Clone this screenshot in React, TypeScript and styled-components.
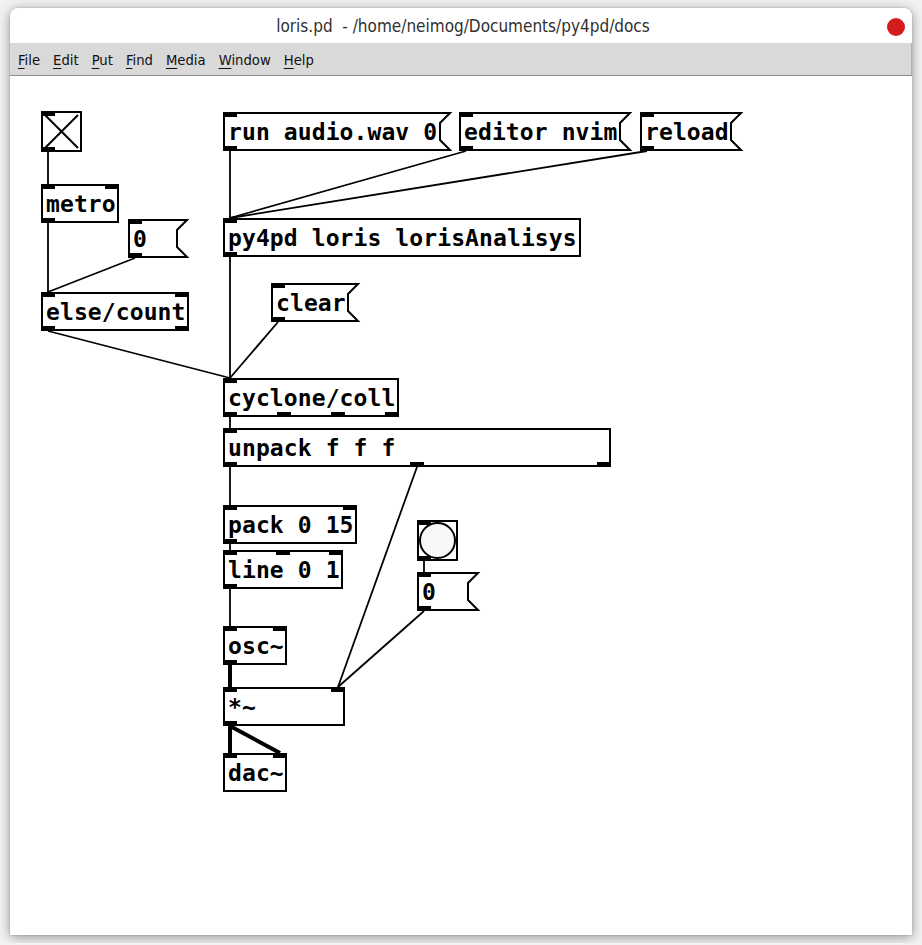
import React from "react";
import styled, { createGlobalStyle } from "styled-components";

const GlobalStyle = createGlobalStyle`
  html, body {
    margin: 0;
    padding: 0;
    background: #f2f2f2;
  }
  body {
    padding: 8px 10px;
    font-family: "DejaVu Sans", sans-serif;
  }
`;

// canvas origin in page coordinates (window left, below the menu bar)
const CX = 10;
const CY = 76;
const IOW = 14;
const IOH = 5;
const BOX_H = 39;
const FLAG = 10;

type Kind = "obj" | "msg" | "tgl" | "bng";

interface PdNode {
  id: string;
  kind: Kind;
  x: number;
  y: number;
  w: number;
  text?: string;
  ins: number;
  outs: number;
}

interface Cord {
  from: string;
  outlet: number;
  to: string;
  inlet: number;
  signal?: boolean;
}

const nodes: PdNode[] = [
  { id: "tgl", kind: "tgl", x: 41, y: 111, w: 41, ins: 1, outs: 1 },
  { id: "metro", kind: "obj", x: 41, y: 184, w: 78, text: "metro", ins: 2, outs: 1 },
  { id: "zero1", kind: "msg", x: 128, y: 219, w: 60, text: "0", ins: 1, outs: 1 },
  { id: "count", kind: "obj", x: 41, y: 292, w: 148, text: "else/count", ins: 2, outs: 2 },
  { id: "run", kind: "msg", x: 223, y: 112, w: 228, text: "run audio.wav 0", ins: 1, outs: 1 },
  { id: "editor", kind: "msg", x: 459, y: 112, w: 172, text: "editor nvim", ins: 1, outs: 1 },
  { id: "reload", kind: "msg", x: 640, y: 112, w: 102, text: "reload", ins: 1, outs: 1 },
  { id: "py4pd", kind: "obj", x: 223, y: 218, w: 358, text: "py4pd loris lorisAnalisys", ins: 1, outs: 1 },
  { id: "clear", kind: "msg", x: 271, y: 283, w: 88, text: "clear", ins: 1, outs: 1 },
  { id: "coll", kind: "obj", x: 223, y: 378, w: 176, text: "cyclone/coll", ins: 1, outs: 4 },
  { id: "unpack", kind: "obj", x: 223, y: 428, w: 388, text: "unpack f f f", ins: 1, outs: 3 },
  { id: "pack", kind: "obj", x: 223, y: 505, w: 134, text: "pack 0 15", ins: 2, outs: 1 },
  { id: "line", kind: "obj", x: 223, y: 550, w: 120, text: "line 0 1", ins: 3, outs: 1 },
  { id: "bng", kind: "bng", x: 417, y: 520, w: 41, ins: 1, outs: 1 },
  { id: "zero2", kind: "msg", x: 417, y: 572, w: 62, text: "0", ins: 1, outs: 1 },
  { id: "osc", kind: "obj", x: 223, y: 626, w: 64, text: "osc~", ins: 2, outs: 1 },
  { id: "mul", kind: "obj", x: 223, y: 687, w: 122, text: "*~", ins: 2, outs: 1 },
  { id: "dac", kind: "obj", x: 223, y: 753, w: 64, text: "dac~", ins: 2, outs: 0 },
];

const cords: Cord[] = [
  { from: "tgl", outlet: 0, to: "metro", inlet: 0 },
  { from: "metro", outlet: 0, to: "count", inlet: 0 },
  { from: "zero1", outlet: 0, to: "count", inlet: 0 },
  { from: "count", outlet: 0, to: "coll", inlet: 0 },
  { from: "run", outlet: 0, to: "py4pd", inlet: 0 },
  { from: "editor", outlet: 0, to: "py4pd", inlet: 0 },
  { from: "reload", outlet: 0, to: "py4pd", inlet: 0 },
  { from: "py4pd", outlet: 0, to: "coll", inlet: 0 },
  { from: "clear", outlet: 0, to: "coll", inlet: 0 },
  { from: "coll", outlet: 0, to: "unpack", inlet: 0 },
  { from: "unpack", outlet: 0, to: "pack", inlet: 0 },
  { from: "unpack", outlet: 1, to: "mul", inlet: 1 },
  { from: "pack", outlet: 0, to: "line", inlet: 0 },
  { from: "line", outlet: 0, to: "osc", inlet: 0 },
  { from: "bng", outlet: 0, to: "zero2", inlet: 0 },
  { from: "zero2", outlet: 0, to: "mul", inlet: 1 },
  { from: "osc", outlet: 0, to: "mul", inlet: 0, signal: true },
  { from: "mul", outlet: 0, to: "dac", inlet: 0, signal: true },
  { from: "mul", outlet: 0, to: "dac", inlet: 1, signal: true },
];

const heightOf = (n: PdNode) => (n.kind === "tgl" || n.kind === "bng" ? n.w : BOX_H);
const bodyWidth = (n: PdNode) => (n.kind === "msg" ? n.w - FLAG : n.w);

const portLeft = (n: PdNode, i: number, count: number) =>
  count > 1 ? Math.round((i * (bodyWidth(n) - IOW)) / (count - 1)) : 0;

const byId = (id: string) => nodes.find((n) => n.id === id)!;

const Window = styled.div`
  width: 902px;
  height: 927px;
  background: #fff;
  border-radius: 8px 8px 0 0;
  box-shadow: 0 2px 12px rgba(0, 0, 0, 0.4), 0 0 1px rgba(0, 0, 0, 0.5);
  display: flex;
  flex-direction: column;
  overflow: hidden;
`;

const TitleBar = styled.div`
  height: 35px;
  display: grid;
  grid-template-columns: 1fr auto 1fr;
  align-items: center;
  background: #fff;
`;

const Title = styled.div`
  grid-column: 2;
  font-family: "DejaVu Sans Condensed", "Liberation Sans Narrow", "DejaVu Sans", sans-serif;
  font-stretch: condensed;
  font-size: 17px;
  color: #303030;
  white-space: pre;
  padding: 1px 0 0 4px;
`;

const CloseButton = styled.span`
  grid-column: 3;
  justify-self: end;
  width: 18px;
  height: 18px;
  margin: 2px 7px 0 0;
  border-radius: 50%;
  background: #d51c1c;
`;

const MenuBar = styled.div`
  height: 32px;
  display: flex;
  align-items: center;
  gap: 13px;
  padding: 0 0 0 8px;
  background: #d9d9d9;
  border-bottom: 1px solid #8c8c8c;
  border-right: 1px solid #b0b0b0;
`;

const MenuItem = styled.span`
  font-family: "DejaVu Sans Condensed", "Liberation Sans Narrow", "DejaVu Sans", sans-serif;
  font-stretch: condensed;
  font-size: 14.7px;
  color: #111;
  padding-top: 1px;

  u {
    text-decoration-thickness: 1px;
    text-underline-offset: 3px;
  }
`;

const Canvas = styled.div`
  position: relative;
  flex: 1;
  background: #fff;
`;

const CordLayer = styled.svg`
  position: absolute;
  inset: 0;
  width: 100%;
  height: 100%;
`;

const NodeFrame = styled.div.attrs<{ $x: number; $y: number; $w: number; $h: number }>((p) => ({
  style: { left: p.$x, top: p.$y, width: p.$w, height: p.$h },
}))<{ $x: number; $y: number; $w: number; $h: number }>`
  position: absolute;
  box-sizing: border-box;
`;

const ObjBox = styled(NodeFrame)`
  border: 2px solid #000;
  background: #fff;
`;

const MsgBox = styled(NodeFrame)`
  background: transparent;
`;

const BoxText = styled.div<{ $inset: number }>`
  position: relative;
  padding: ${(p) => p.$inset + 5}px 0 0 ${(p) => p.$inset + 3}px;
  font-family: "DejaVu Sans Mono", monospace;
  font-weight: bold;
  font-size: 23px;
  letter-spacing: 0.1px;
  line-height: 27px;
  color: #000;
  white-space: pre;
`;

const Outline = styled.svg`
  position: absolute;
  inset: 0;
  overflow: visible;
`;

const Port = styled.span<{ $left: number; $bottom?: boolean; $inset: number }>`
  position: absolute;
  left: ${(p) => p.$left - p.$inset}px;
  ${(p) => (p.$bottom ? `bottom: ${-p.$inset}px;` : `top: ${-p.$inset}px;`)}
  width: ${IOW}px;
  height: ${IOH}px;
  background: #000;
`;

const Ports: React.FC<{ n: PdNode; inset: number }> = ({ n, inset }) => (
  <>
    {Array.from({ length: n.ins }, (_, i) => (
      <Port key={"i" + i} $inset={inset} $left={portLeft(n, i, n.ins)} />
    ))}
    {Array.from({ length: n.outs }, (_, i) => (
      <Port key={"o" + i} $inset={inset} $bottom $left={portLeft(n, i, n.outs)} />
    ))}
  </>
);

const PatchNode: React.FC<{ n: PdNode }> = ({ n }) => {
  const h = heightOf(n);
  const frame = { $x: n.x - CX, $y: n.y - CY, $w: n.w, $h: h };

  if (n.kind === "obj") {
    return (
      <ObjBox {...frame}>
        <BoxText $inset={0}>{n.text}</BoxText>
        <Ports n={n} inset={2} />
      </ObjBox>
    );
  }

  const w = n.w;
  let drawing: React.ReactNode;
  if (n.kind === "msg") {
    drawing = (
      <path
        d={`M1 1 H${w - 1} L${w - 1 - FLAG} ${1 + FLAG} V${h - 1 - FLAG} L${w - 1} ${h - 1} H1 Z`}
        fill="#fff"
        stroke="#000"
        strokeWidth={2}
      />
    );
  } else if (n.kind === "tgl") {
    drawing = (
      <>
        <rect x={1} y={1} width={w - 2} height={h - 2} fill="#fff" stroke="#000" strokeWidth={2} />
        <path d={`M4 4 L${w - 4} ${h - 4} M${w - 4} 4 L4 ${h - 4}`} stroke="#000" strokeWidth={2} />
      </>
    );
  } else {
    drawing = (
      <>
        <rect x={1} y={1} width={w - 2} height={h - 2} fill="#fff" stroke="#000" strokeWidth={2} />
        <circle cx={w / 2} cy={h / 2} r={w / 2 - 3} fill="#f7f7f7" stroke="#000" strokeWidth={2} />
      </>
    );
  }

  return (
    <MsgBox {...frame}>
      <Outline width={w} height={h}>
        {drawing}
      </Outline>
      {n.text && <BoxText $inset={2}>{n.text}</BoxText>}
      <Ports n={n} inset={0} />
    </MsgBox>
  );
};

const menu = ["File", "Edit", "Put", "Find", "Media", "Window", "Help"];

export default function App() {
  return (
    <>
      <GlobalStyle />
      <Window>
        <TitleBar>
          <Title>loris.pd  - /home/neimog/Documents/py4pd/docs</Title>
          <CloseButton />
        </TitleBar>
        <MenuBar>
          {menu.map((m) => (
            <MenuItem key={m}>
              <u>{m[0]}</u>
              {m.slice(1)}
            </MenuItem>
          ))}
        </MenuBar>
        <Canvas>
          <CordLayer>
            {cords.map((c, i) => {
              const a = byId(c.from);
              const b = byId(c.to);
              const x1 = a.x - CX + portLeft(a, c.outlet, a.outs) + IOW / 2;
              const y1 = a.y - CY + heightOf(a);
              const x2 = b.x - CX + portLeft(b, c.inlet, b.ins) + IOW / 2;
              const y2 = b.y - CY;
              return (
                <line
                  key={i}
                  x1={x1}
                  y1={y1}
                  x2={x2}
                  y2={y2}
                  stroke="#000"
                  strokeWidth={c.signal ? 4 : 1.8}
                />
              );
            })}
          </CordLayer>
          {nodes.map((n) => (
            <PatchNode key={n.id} n={n} />
          ))}
        </Canvas>
      </Window>
    </>
  );
}
